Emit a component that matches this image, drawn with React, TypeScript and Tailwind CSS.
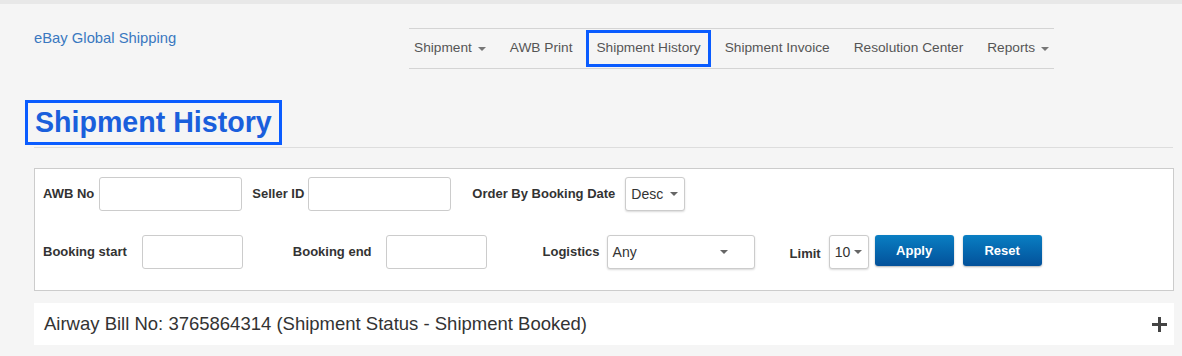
const navItems = [
  { label: 'Shipment', caret: true },
  { label: 'AWB Print' },
  { label: 'Shipment History', active: true },
  { label: 'Shipment Invoice' },
  { label: 'Resolution Center' },
  { label: 'Reports', caret: true },
];

function Caret() {
  return (
    <span className="ml-[6px] inline-block h-0 w-0 border-x-[4px] border-t-[4px] border-x-transparent border-t-[#777] align-middle" />
  );
}

function TextInput({ width }: { width: string }) {
  return <div className={`${width} h-[34px] rounded-[3px] border border-[#ccc] bg-white`} />;
}

function Select({ value, width, padRight }: { value: string; width: string; padRight: string }) {
  return (
    <div
      className={`${width} flex h-[34px] items-center justify-between rounded-[3px] border border-[#ccc] bg-white pl-[5px] ${padRight} text-[14px] text-[#333] shadow-[0_1px_2px_rgba(0,0,0,0.15)]`}
    >
      <span>{value}</span>
      <span className="inline-block h-0 w-0 border-x-[4px] border-t-[4px] border-x-transparent border-t-[#666]" />
    </div>
  );
}

function BlueButton({ label }: { label: string }) {
  return (
    <button className="h-[31px] w-[79px] rounded-[3px] bg-gradient-to-b from-[#0a7fc3] to-[#04519a] text-[13px] font-bold text-white shadow-[0_1px_2px_rgba(0,0,0,0.3)]">
      {label}
    </button>
  );
}

export default function App() {
  return (
    <div
      className="min-h-[356px] border-t-[4px] border-[#e8e8e8] bg-[#f5f5f5]"
      style={{ fontFamily: '"Liberation Sans", Arial, sans-serif' }}
    >
      <div className="flex pt-[24px]">
        <div className="w-[409px] pl-[34px] text-[14.8px] leading-[20px] text-[#3a78c0]">eBay Global Shipping</div>
        <nav className="flex h-[41px] w-[645px] items-stretch gap-[24px] whitespace-nowrap border-y border-[#d4d4d4] px-[5px] text-[13.7px] text-[#555]">
          {navItems.map((item) => (
            <div key={item.label} className="relative flex items-center">
              {item.active && (
                <span className="absolute -left-[10px] -right-[10px] top-[1px] bottom-[1px] border-[3px] border-[#0a5cff]" />
              )}
              <span>{item.label}</span>
              {item.caret && <Caret />}
            </div>
          ))}
        </nav>
      </div>

      <div className="ml-[34px] mt-[31px] w-[1139px] border-b border-[#ddd] pb-[2px]">
        <h1 className="-ml-[9px] inline-block border-[3px] border-[#0a5cff] px-[7px] text-[28.6px] font-bold leading-[39px] text-[#1a5fdc]">
          Shipment History
        </h1>
      </div>

      <div className="ml-[34px] mt-[20px] w-[1140px] border border-[#ccc] bg-white pb-[21px] pl-[8px] pt-[8px] text-[13px] font-bold text-[#333]">
        <div className="flex items-center">
          <span>AWB No</span>
          <div className="ml-[5px]">
            <TextInput width="w-[143px]" />
          </div>
          <span className="ml-[10px]">Seller ID</span>
          <div className="ml-[4px]">
            <TextInput width="w-[143px]" />
          </div>
          <span className="ml-[21px]">Order By Booking Date</span>
          <div className="ml-[10px] font-normal">
            <Select value="Desc" width="w-[60px]" padRight="pr-[6px]" />
          </div>
        </div>
        <div className="mt-[24px] flex items-center">
          <span>Booking start</span>
          <div className="ml-[15px]">
            <TextInput width="w-[101px]" />
          </div>
          <span className="ml-[50px]">Booking end</span>
          <div className="ml-[14px]">
            <TextInput width="w-[101px]" />
          </div>
          <span className="ml-[56px]">Logistics</span>
          <div className="ml-[7px] font-normal">
            <Select value="Any" width="w-[148px]" padRight="pr-[26px]" />
          </div>
          <span className="ml-[35px] mt-[4px]">Limit</span>
          <div className="ml-[8px] font-normal">
            <Select value="10" width="w-[40px]" padRight="pr-[6px]" />
          </div>
          <div className="ml-[6px] -mt-[3px] flex gap-[9px]">
            <BlueButton label="Apply" />
            <BlueButton label="Reset" />
          </div>
        </div>
      </div>

      <div className="ml-[34px] mt-[12px] flex h-[42px] w-[1140px] items-center justify-between bg-white pl-[10px] pr-[7px]">
        <span className="text-[18.5px] text-[#333]">Airway Bill No: 3765864314 (Shipment Status - Shipment Booked)</span>
        <svg width="15" height="15" viewBox="0 0 15 15">
          <rect x="0" y="6" width="15" height="3" fill="#444" />
          <rect x="6" y="0" width="3" height="15" fill="#444" />
        </svg>
      </div>
    </div>
  );
}
